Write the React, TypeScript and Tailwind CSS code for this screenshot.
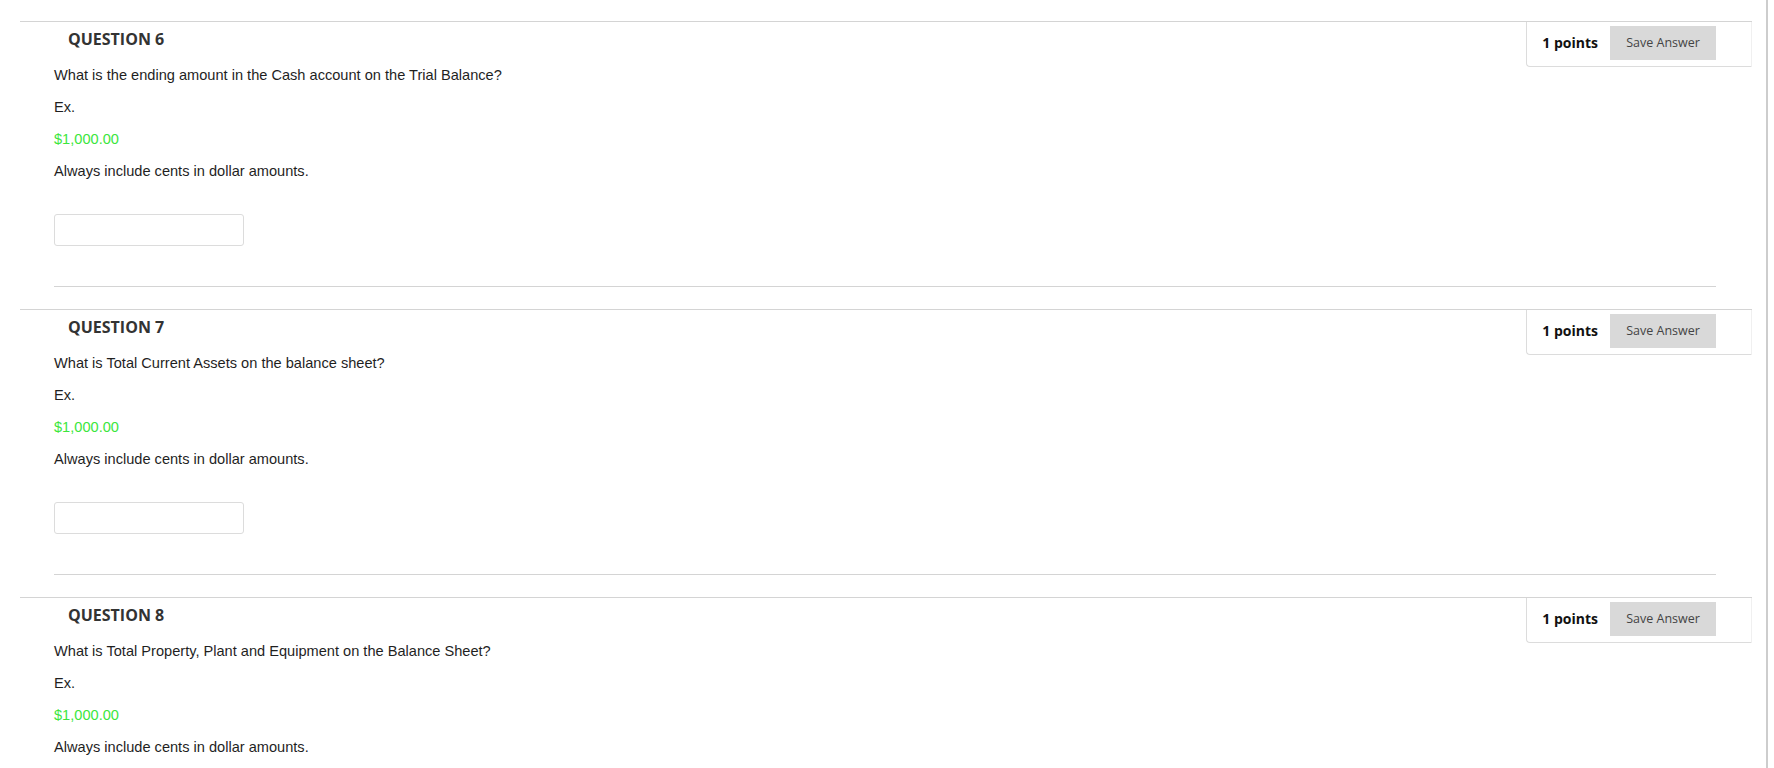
import React from "react";

const questions = [
  { n: 6, q: "What is the ending amount in the Cash account on the Trial Balance?" },
  { n: 7, q: "What is Total Current Assets on the balance sheet?" },
  { n: 8, q: "What is Total Property, Plant and Equipment on the Balance Sheet?" },
];

function Question({ n, q }: { n: number; q: string }) {
  return (
    <div className="relative border-t border-[#d4d4d4]">
      <div className="absolute top-0 right-0 flex items-center border-l border-b border-r border-l-[#dcdcdc] border-b-[#dcdcdc] border-r-[#f0f0f0] rounded-bl-[4px] pt-[4px] pb-[6px] pl-[15px] pr-[35px] bg-white">
        <span
          className="text-[14px] font-bold text-[#111] mr-[12px] leading-[20px]"
          style={{ fontFamily: '"Open Sans", sans-serif' }}
        >
          1 points
        </span>
        <button
          className="w-[106px] h-[34px] bg-[#d9d9d9] text-[12.5px] text-[#444]"
          style={{ fontFamily: '"Open Sans", sans-serif' }}
        >
          Save Answer
        </button>
      </div>
      <div className="pt-[6px] pl-[34px] pr-[36px]">
        <h2
          className="pl-[14px] text-[16px] font-bold leading-[22px] text-[#333]"
          style={{ fontFamily: '"Open Sans", sans-serif' }}
        >
          QUESTION {n}
        </h2>
        <div
          className="text-[14.6px] leading-[20px] text-[#1f1f1f]"
          style={{ fontFamily: '"Liberation Sans", Arial, sans-serif' }}
        >
          <p className="mt-[15px]">{q}</p>
          <p className="mt-[12px]">Ex.</p>
          <p className="mt-[12px] text-[#3ce63c]">$1,000.00</p>
          <p className="mt-[12px]">Always include cents in dollar amounts.</p>
        </div>
        <div className="mt-[33px] w-[190px] h-[32px] border border-[#dcdcdc] rounded-[3px] bg-white" />
        <div className="mt-[40px] border-t border-[#d4d4d4] mb-[22px]" />
      </div>
    </div>
  );
}

export default function App() {
  return (
    <div className="flex w-[1774px] h-[768px] overflow-hidden bg-white">
      <div className="w-[1766px] shrink-0 pt-[21px]">
        <div className="ml-[20px] w-[1732px]">
          {questions.map((x) => (
            <Question key={x.n} n={x.n} q={x.q} />
          ))}
        </div>
      </div>
      <div className="w-[2px] h-full bg-[#cdcdcd] shrink-0" />
      <div className="flex-1 bg-white" />
    </div>
  );
}
